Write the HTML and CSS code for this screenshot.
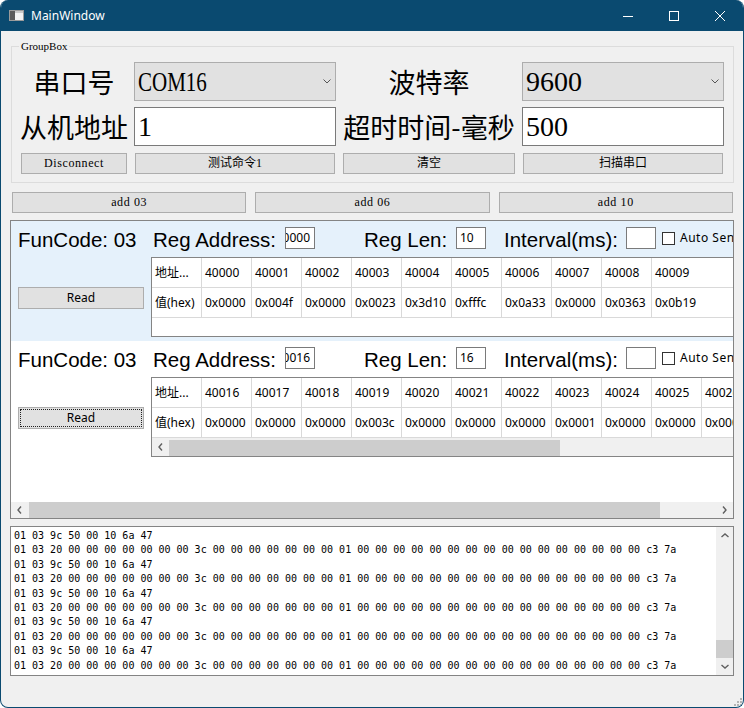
FILE: index.html
```html
<!DOCTYPE html>
<html lang="zh">
<head>
<meta charset="utf-8">
<title>MainWindow</title>
<link rel="stylesheet" href="styles.css">
</head>
<body>
<div class="window">
  <div class="titlebar">
    <svg class="app-icon" width="15" height="11" viewBox="0 0 15 11"><rect x="0.5" y="0.5" width="14" height="10" fill="#f2f2f2" stroke="#9b9b9b"/><rect x="1" y="1" width="5" height="9" fill="#5a5a5a"/><rect x="6" y="1" width="8" height="2" fill="#c9c9c9"/></svg>
    <span class="title">MainWindow</span>
    <div class="controls">
      <span class="ctl"><svg width="10" height="10" viewBox="0 0 10 10"><path d="M0 5.5H10" stroke="#fff" stroke-width="1" shape-rendering="crispEdges"/></svg></span>
      <span class="ctl"><svg width="10" height="10" viewBox="0 0 10 10"><rect x="0.5" y="0.5" width="9" height="9" fill="none" stroke="#fff" stroke-width="1" shape-rendering="crispEdges"/></svg></span>
      <span class="ctl"><svg width="10" height="10" viewBox="0 0 10 10"><path d="M0 0L10 10M10 0L0 10" stroke="#fff" stroke-width="1"/></svg></span>
    </div>
  </div>
  <div class="client">
    <div class="groupbox">
      <span class="gb-title">GroupBox</span>
      <div class="gb-grid">
        <div class="big-label">串口号</div>
        <div class="combo"><span class="combo-text narrow">COM16</span><svg class="chev" width="8" height="5" viewBox="0 0 8 5"><path d="M0.5 0.5L4 4L7.5 0.5" fill="none" stroke="#555" stroke-width="1"/></svg></div>
        <div class="big-label">波特率</div>
        <div class="combo"><span class="combo-text">9600</span><svg class="chev" width="8" height="5" viewBox="0 0 8 5"><path d="M0.5 0.5L4 4L7.5 0.5" fill="none" stroke="#555" stroke-width="1"/></svg></div>
        <div class="big-label">从机地址</div>
        <div class="lineedit">1</div>
        <div class="big-label">超时时间-毫秒</div>
        <div class="lineedit">500</div>
        <button class="btn btn-latin">Disconnect</button>
        <button class="btn">测试命令1</button>
        <button class="btn">清空</button>
        <button class="btn">扫描串口</button>
      </div>
    </div>

    <div class="add-row">
      <button class="btn btn-latin">add 03</button>
      <button class="btn btn-latin">add 06</button>
      <button class="btn btn-latin">add 10</button>
    </div>

    <div class="scrollarea">
      <div class="viewport">
        <div class="content">
          <div class="panel hover">
            <div class="panel-head">
              <span class="lbl fc">FunCode: 03</span>
              <span class="lbl lbl-addr">Reg Address:</span>
              <span class="small-edit scrolled"><span>40000</span></span>
              <span class="lbl lbl-len">Reg Len:</span>
              <span class="small-edit">10</span>
              <span class="lbl lbl-int">Interval(ms):</span>
              <span class="small-edit"></span>
              <span class="check"></span>
              <span class="check-label">Auto Send</span>
            </div>
            <div class="panel-body">
              <div class="read-col"><button class="read-btn">Read</button></div>
              <div class="table">
                <div class="trow">
                  <div class="cell">地址...</div><div class="cell">40000</div><div class="cell">40001</div><div class="cell">40002</div><div class="cell">40003</div><div class="cell">40004</div><div class="cell">40005</div><div class="cell">40006</div><div class="cell">40007</div><div class="cell">40008</div><div class="cell">40009</div>
                </div>
                <div class="trow">
                  <div class="cell">值(hex)</div><div class="cell">0x0000</div><div class="cell">0x004f</div><div class="cell">0x0000</div><div class="cell">0x0023</div><div class="cell">0x3d10</div><div class="cell">0xfffc</div><div class="cell">0x0a33</div><div class="cell">0x0000</div><div class="cell">0x0363</div><div class="cell">0x0b19</div>
                </div>
              </div>
            </div>
          </div>

          <div class="panel">
            <div class="panel-head">
              <span class="lbl fc">FunCode: 03</span>
              <span class="lbl lbl-addr">Reg Address:</span>
              <span class="small-edit scrolled"><span>40016</span></span>
              <span class="lbl lbl-len">Reg Len:</span>
              <span class="small-edit">16</span>
              <span class="lbl lbl-int">Interval(ms):</span>
              <span class="small-edit"></span>
              <span class="check"></span>
              <span class="check-label">Auto Send</span>
            </div>
            <div class="panel-body">
              <div class="read-col"><button class="read-btn focused">Read</button></div>
              <div class="table">
                <div class="trow">
                  <div class="cell">地址...</div><div class="cell">40016</div><div class="cell">40017</div><div class="cell">40018</div><div class="cell">40019</div><div class="cell">40020</div><div class="cell">40021</div><div class="cell">40022</div><div class="cell">40023</div><div class="cell">40024</div><div class="cell">40025</div><div class="cell">40026</div><div class="cell">40027</div><div class="cell">40028</div><div class="cell">40029</div><div class="cell">40030</div><div class="cell">40031</div>
                </div>
                <div class="trow">
                  <div class="cell">值(hex)</div><div class="cell">0x0000</div><div class="cell">0x0000</div><div class="cell">0x0000</div><div class="cell">0x003c</div><div class="cell">0x0000</div><div class="cell">0x0000</div><div class="cell">0x0000</div><div class="cell">0x0001</div><div class="cell">0x0000</div><div class="cell">0x0000</div><div class="cell">0x0000</div><div class="cell">0x0000</div><div class="cell">0x0000</div><div class="cell">0x0000</div><div class="cell">0x0000</div><div class="cell">0x0000</div>
                </div>
                <div class="tscroll">
                  <span class="arrow"><svg width="5" height="8" viewBox="0 0 5 8"><path d="M4 0.5L1 4L4 7.5" fill="none" stroke="#606060" stroke-width="1.4"/></svg></span>
                  <span class="thumb tthumb"></span>
                </div>
              </div>
            </div>
          </div>
        </div>
      </div>
      <div class="hscroll">
        <span class="arrow"><svg width="5" height="8" viewBox="0 0 5 8"><path d="M4 0.5L1 4L4 7.5" fill="none" stroke="#606060" stroke-width="1.4"/></svg></span>
        <span class="thumb hthumb"></span>
        <span class="spacer"></span>
        <span class="arrow"><svg width="5" height="8" viewBox="0 0 5 8"><path d="M1 0.5L4 4L1 7.5" fill="none" stroke="#606060" stroke-width="1.4"/></svg></span>
      </div>
    </div>

    <div class="log">
      <div class="log-text">01 03 9c 50 00 10 6a 47
01 03 20 00 00 00 00 00 00 00 3c 00 00 00 00 00 00 00 01 00 00 00 00 00 00 00 00 00 00 00 00 00 00 00 00 c3 7a
01 03 9c 50 00 10 6a 47
01 03 20 00 00 00 00 00 00 00 3c 00 00 00 00 00 00 00 01 00 00 00 00 00 00 00 00 00 00 00 00 00 00 00 00 c3 7a
01 03 9c 50 00 10 6a 47
01 03 20 00 00 00 00 00 00 00 3c 00 00 00 00 00 00 00 01 00 00 00 00 00 00 00 00 00 00 00 00 00 00 00 00 c3 7a
01 03 9c 50 00 10 6a 47
01 03 20 00 00 00 00 00 00 00 3c 00 00 00 00 00 00 00 01 00 00 00 00 00 00 00 00 00 00 00 00 00 00 00 00 c3 7a
01 03 9c 50 00 10 6a 47
01 03 20 00 00 00 00 00 00 00 3c 00 00 00 00 00 00 00 01 00 00 00 00 00 00 00 00 00 00 00 00 00 00 00 00 c3 7a</div>
      <div class="vscroll">
        <span class="varrow"><svg width="8" height="5" viewBox="0 0 8 5"><path d="M0.5 4L4 1L7.5 4" fill="none" stroke="#606060" stroke-width="1.4"/></svg></span>
        <span class="spacer"></span>
        <span class="thumb vthumb"></span>
        <span class="varrow"><svg width="8" height="5" viewBox="0 0 8 5"><path d="M0.5 1L4 4L7.5 1" fill="none" stroke="#606060" stroke-width="1.4"/></svg></span>
      </div>
    </div>

    <div class="status">
      <svg width="9" height="9" viewBox="0 0 9 9"><g fill="#b4b4b4"><rect x="7" y="1" width="2" height="2"/><rect x="4" y="4" width="2" height="2"/><rect x="7" y="4" width="2" height="2"/><rect x="1" y="7" width="2" height="2"/><rect x="4" y="7" width="2" height="2"/><rect x="7" y="7" width="2" height="2"/></g></svg>
    </div>
  </div>
</div>
</body>
</html>
```

FILE: styles.css
```css
* { box-sizing: border-box; margin: 0; padding: 0; }
html, body { width: 744px; height: 708px; background: #ffffff; overflow: hidden; }
body { font-family: "Noto Sans", "Noto Sans CJK SC", sans-serif; color: #000; }

.window {
  width: 744px; height: 708px;
  border: 1px solid #0a4a70; border-top: 0;
  border-radius: 8px;
  overflow: hidden;
  display: flex; flex-direction: column;
  background: #f0f0f0;
}

/* title bar */
.titlebar { height: 31px; flex: none; background: #0a4a70; display: flex; align-items: center; color: #fff; }
.app-icon { margin-left: 8px; flex: none; }
.title { margin-left: 7px; font: 12px/16px "Noto Sans", sans-serif; color: #fff; }
.controls { margin-left: auto; display: flex; height: 100%; }
.ctl { width: 46px; display: flex; align-items: center; justify-content: center; }

/* client */
.client { flex: 1; display: flex; flex-direction: column; padding: 0 9px; min-height: 0; }

.groupbox { position: relative; margin: 15px 0 0 1px; width: 723px; border: 1px solid #dcdcdc; padding: 15px 9px 8px 8px; flex: none; }
.gb-title { position: absolute; top: -7px; left: 7px; padding: 0 2px; background: #f0f0f0; font: 11px/12px "Liberation Serif", serif; }
.gb-grid {
  display: grid;
  grid-template-columns: 108px 202px 174px 202px;
  grid-template-rows: 39px 39px 22px;
  column-gap: 6px; row-gap: 6px;
}
.big-label { display: flex; align-items: center; justify-content: center; white-space: nowrap; font: 27px/1 "Noto Sans CJK SC", sans-serif; }
.combo { background: #e1e1e1; border: 1px solid #adadad; display: flex; align-items: center; justify-content: space-between; padding: 0 4px 0 3px; }
.combo-text { font: 28px/1 "Liberation Serif", serif; white-space: nowrap; }
.narrow { display: inline-block; transform: scaleX(0.75); transform-origin: left center; }
.chev { flex: none; }
.lineedit { background: #fff; border: 1px solid #7a7a7a; display: flex; align-items: center; padding-left: 3px; font: 28px/1 "Liberation Serif", serif; }

.btn {
  height: 21px; align-self: end; margin: 0 1px;
  background: #e1e1e1; border: 1px solid #adadad; color: #000;
  font: 12px/19px "Liberation Serif", "Noto Sans CJK SC", serif;
  white-space: nowrap;
}
.btn-latin { letter-spacing: 0.6px; }

.add-row { display: flex; gap: 9px; margin-top: 9px; padding: 0 1px 0 2px; height: 21px; flex: none; }
.add-row .btn { flex: 1; margin: 0; }

/* scroll area */
.scrollarea { margin-top: 7px; height: 299px; border: 1px solid #848484; background: #fff; display: flex; flex-direction: column; flex: none; }
.viewport { height: 281px; overflow: hidden; flex: none; }
.content { width: 790px; }
.panel { height: 120px; padding: 6px 0 0 7px; }
.panel.hover { background: #e5f1fb; }
.panel-head { display: flex; align-items: flex-start; height: 26px; }
.lbl { font: 20.5px/26px "Liberation Sans", sans-serif; white-space: nowrap; flex: none; }
.fc { width: 135px; }
.lbl-addr { width: 132px; }
.lbl-len { margin-left: 49px; width: 92px; }
.lbl-int { margin-left: 18px; width: 122px; }
.small-edit { width: 30px; height: 22px; flex: none; border: 1px solid #7a7a7a; background: #fff; padding-left: 3px; font: 12px/20px "Noto Sans", sans-serif; overflow: hidden; white-space: nowrap; }
.scrolled { display: flex; justify-content: flex-end; padding: 0 4px 0 0; }
.scrolled span { flex: none; }
.check { width: 13px; height: 13px; flex: none; border: 1px solid #333; background: #fff; margin: 5px 0 0 6px; }
.check-label { margin-left: 5px; font: 12px/22px "Noto Sans", sans-serif; letter-spacing: 0.5px; white-space: nowrap; }

.panel-body { display: flex; margin-top: 4px; height: 80px; }
.read-col { width: 133px; flex: none; padding-top: 28px; }
.read-btn { width: 126px; height: 22px; background: #e1e1e1; border: 1px solid #adadad; color: #000; font: 12px/20px "Noto Sans", sans-serif; }
.read-btn.focused { outline: 1px dotted #222; outline-offset: -3px; }

.table { width: 640px; height: 80px; flex: none; border: 1px solid #848484; background: #fff; overflow: hidden; display: flex; flex-direction: column; }
.trow { display: flex; height: 30px; flex: none; border-bottom: 1px solid #d9d9d9; }
.cell { width: 50px; flex: none; border-right: 1px solid #d9d9d9; padding-left: 3px; font: 12px/29px "Noto Sans", "Noto Sans CJK SC", sans-serif; white-space: nowrap; overflow: hidden; }
.cell:last-child { border-right: 0; }

.tscroll { height: 18px; flex: none; background: #f0f0f0; display: flex; }
.arrow { width: 17px; flex: none; display: flex; align-items: center; justify-content: center; }
.tscroll .arrow { width: 16px; }
.thumb { background: #cdcdcd; flex: none; }
.tthumb { margin: 2px 0 0 1px; width: 391px; height: 16px; }

.hscroll { height: 16px; flex: none; display: flex; background: #f0f0f0; }
.hthumb { margin-left: 1px; width: 631px; }
.spacer { flex: 1; }

/* log */
.log { margin-top: 7px; height: 150px; flex: none; border: 1px solid #848484; background: #fff; display: flex; }
.log-text { flex: 1; padding: 2px 0 0 3px; font: 10px/14.4px "DejaVu Sans Mono", monospace; white-space: pre; overflow: hidden; }
.vscroll { width: 17px; flex: none; background: #f0f0f0; display: flex; flex-direction: column; }
.varrow { height: 17px; flex: none; display: flex; align-items: center; justify-content: center; }
.vthumb { height: 18px; }

.status { flex: 1; margin: 0 -9px; display: flex; justify-content: flex-end; align-items: flex-end; padding: 0 1px 1px 0; }
```
